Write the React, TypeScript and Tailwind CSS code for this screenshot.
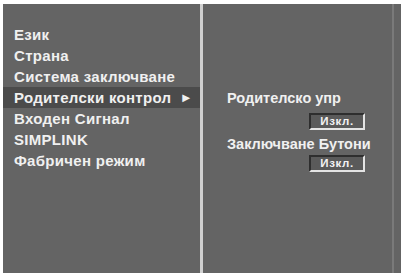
export default function App() {
  const items = [
    'Език',
    'Страна',
    'Система заключване',
    'Родителски контрол',
    'Входен Сигнал',
    'SIMPLINK',
    'Фабричен режим',
  ];
  const active = 3;

  return (
    <div
      className="w-[401px] h-[273px] bg-white pt-[4px] pl-[3px] overflow-hidden"
      style={{ fontFamily: '"Liberation Sans", Arial, sans-serif' }}
    >
      <div className="flex h-full bg-[#646464]">
        {/* left menu */}
        <div className="w-[197px] pt-[20px] flex flex-col">
          {items.map((label, i) => (
            <div
              key={label}
              className={`h-[21px] flex items-center pl-[11px] pr-[7px] text-[15px] tracking-[0.3px] font-bold text-[#f0f0f0] leading-none ${
                i === active ? 'bg-[#4b4b4b]' : ''
              }`}
            >
              <span className="flex-1 whitespace-nowrap">{label}</span>
              {i === active && <span className="text-[13px]">►</span>}
            </div>
          ))}
        </div>

        {/* divider */}
        <div className="w-[3px] bg-[#d0d0d0]" />

        {/* right panel */}
        <div className="flex-1 pl-[24px] pt-[85px] text-[#f0f0f0] font-bold text-[14.5px] leading-none border-r-2 border-[#7a7a7a] mr-[7px]">
          <div className="h-[18px] flex items-center whitespace-nowrap">Родителско упр</div>
          <div className="flex justify-end pr-[27px] mt-[6px]">
            <OffBox />
          </div>
          <div className="h-[18px] flex items-center mt-[5px] whitespace-nowrap">Заключване Бутони</div>
          <div className="flex justify-end pr-[27px] mt-[2px]">
            <OffBox />
          </div>
        </div>
      </div>
    </div>
  );
}

function OffBox() {
  return (
    <div className="w-[56px] h-[17px] flex items-center justify-center bg-[#5a5a5a] border-t-2 border-l-2 border-[#2e2e2e] border-b-2 border-r-2 border-b-[#e4e4e4] border-r-[#e4e4e4] text-[11.5px] tracking-[0.6px] font-bold text-[#f2f2f2] leading-none">
      Изкл.
    </div>
  );
}
